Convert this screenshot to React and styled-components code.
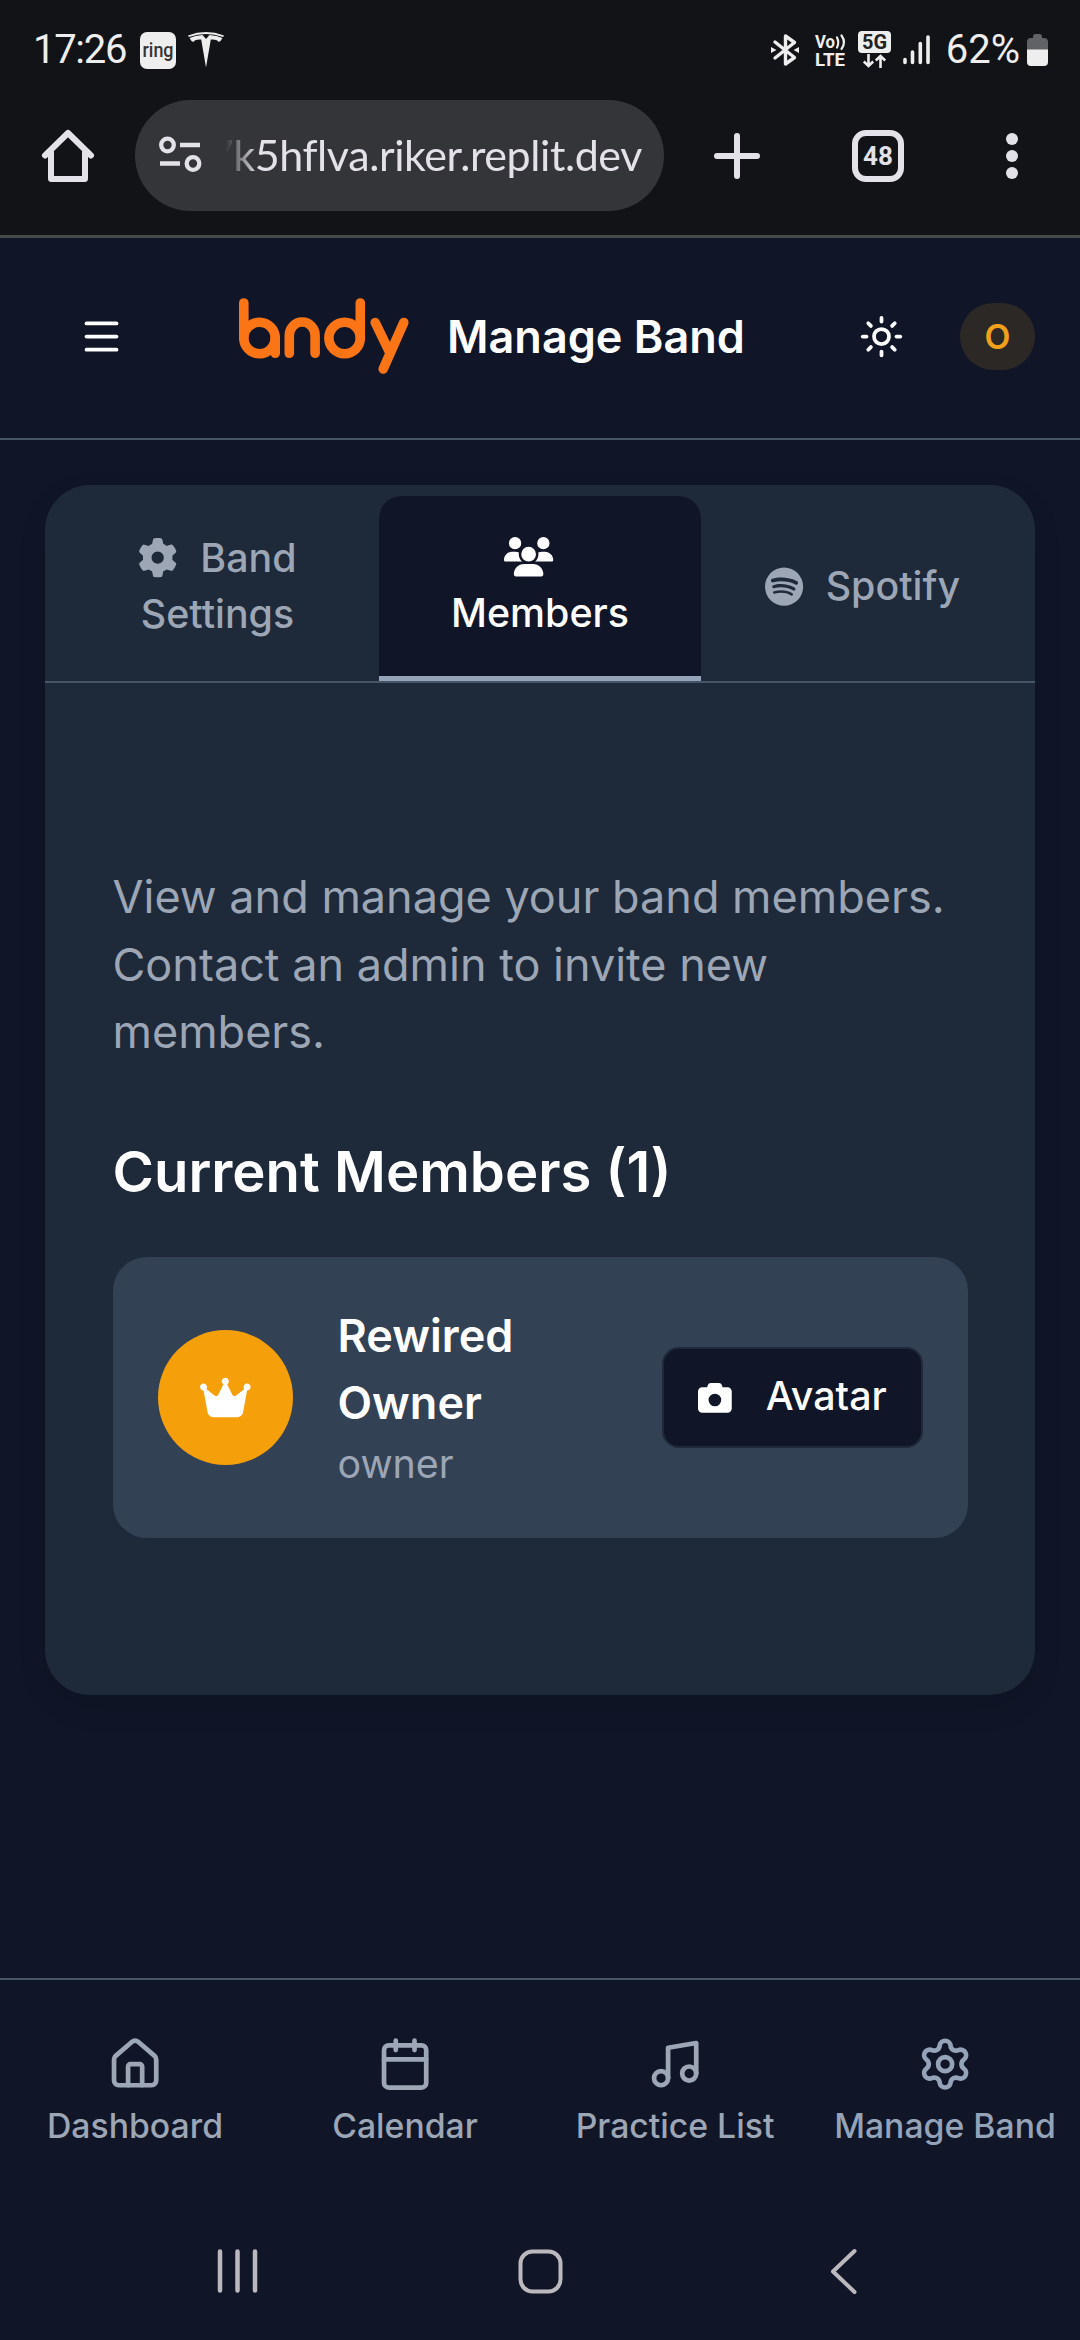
import React from "react";
import styled, { createGlobalStyle, css } from "styled-components";
import { Menu, Sun, House, Calendar, Music, Settings } from "lucide-react";
import { FaGear, FaUsers, FaSpotify, FaCrown, FaCamera } from "react-icons/fa6";

const color = {
  chrome: "#121317",
  chromeField: "#343539",
  chromeInk: "#e3e2e8",
  statusInk: "#eeeeee",
  page: "#101628",
  panel: "#1e293a",
  tile: "#334155",
  line: "#475569",
  muted: "#9ca6b5",
  accent: "#94a3b8",
  brand: "#fb7516",
  amber: "#f59f0b",
};

const GlobalStyle = createGlobalStyle`
  html { font-size: 45px; }
  * { box-sizing: border-box; }
  body { margin: 0; background: ${color.page}; }
  button { border: 0; margin: 0; padding: 0; background: none; font: inherit; color: inherit; }
  h1, h2, p { margin: 0; }
  svg { display: block; flex: none; overflow: visible; }
`;

const Screen = styled.div`
  width: 1080px;
  height: 2340px;
  display: flex;
  flex-direction: column;
  overflow: hidden;
  background: ${color.page};
  color: #fff;
  font-family: Inter, "Liberation Sans", sans-serif;
`;

/* Device status bar */
const StatusBar = styled.div`
  height: 100px;
  display: flex;
  align-items: flex-start;
  justify-content: space-between;
  padding: 26px 32px 0 33px;
  background: ${color.chrome};
  color: ${color.statusInk};
`;
const StatusGroup = styled.div`
  display: flex;
  align-items: center;
  height: 48px;
  gap: ${(p) => p.$gap}px;
`;
const StatusText = styled.span`
  font: 400 40px/48px Roboto, sans-serif;
  letter-spacing: ${(p) => p.$track || 0}px;
`;

/* Browser toolbar */
const Toolbar = styled.div`
  height: 138px;
  display: flex;
  align-items: flex-start;
  background: ${color.chrome};
  border-bottom: 3px solid #484a48;
  color: ${color.chromeInk};
`;
const ToolButton = styled.button`
  width: ${(p) => p.$width}px;
  height: 112px;
  display: flex;
  align-items: center;
  justify-content: center;
`;
const AddressField = styled.div`
  width: 529px;
  height: 111px;
  border-radius: 56px;
  background: ${color.chromeField};
  display: flex;
  align-items: center;
  padding: 0 22px 2px 24px;
`;
const Address = styled.div`
  flex: 1;
  margin-left: 24px;
  display: flex;
  justify-content: flex-end;
  overflow: hidden;
  white-space: nowrap;
  font: 400 43px/60px Lato, sans-serif;
  letter-spacing: -0.4px;
  mask-image: linear-gradient(to right, transparent 0, #000 32px);
`;
const TabCount = styled.span`
  width: 52px;
  height: 52px;
  border: 6px solid currentColor;
  border-radius: 14px;
  display: flex;
  align-items: center;
  justify-content: center;
  font: 700 26px/1 Roboto, sans-serif;
`;

/* App header */
const Header = styled.header`
  height: 202px;
  flex: none;
  display: flex;
  align-items: center;
  padding: 0 45px 3px 79px;
  border-bottom: 2px solid ${color.line};
`;
const Title = styled.h1`
  margin-left: 38px;
  font-size: 1rem;
  font-weight: 600;
  line-height: 1.5rem;
`;
const Logo = styled.svg`
  margin-left: 115px;
`;
const HeaderActions = styled.div`
  margin-left: auto;
  display: flex;
  align-items: center;
  gap: 56px;
`;
const UserBadge = styled.span`
  width: 75px;
  height: 67px;
  border-radius: 34px;
  background: #2c2826;
  color: #f0a01a;
  display: flex;
  align-items: center;
  justify-content: center;
  font-size: 0.75rem;
  font-weight: 600;
  line-height: 1rem;
`;

/* Content panel */
const Main = styled.main`
  flex: 1;
  padding: 1rem 1rem 0;
`;
const Panel = styled.section`
  height: 1210px;
  border-radius: 1rem;
  background: ${color.panel};
  box-shadow: 0 12px 28px rgba(0, 0, 0, 0.12);
`;
const Tabs = styled.nav`
  height: 198px;
  display: grid;
  grid-template-columns: repeat(3, 1fr);
  padding: 0.25rem 0.25rem 0;
  border-bottom: 2px solid ${color.line};
`;
const Tab = styled.button`
  padding: 0 1rem;
  font-size: 0.875rem;
  font-weight: 500;
  line-height: 1.25rem;
  color: ${color.muted};
  border-bottom: 5px solid transparent;
  svg {
    display: inline;
    width: ${(p) => p.$iconWidth}em;
    height: 1em;
    vertical-align: -0.15em;
    margin-right: 0.5rem;
  }
  ${(p) =>
    p.$active &&
    css`
      padding-bottom: 3px;
      color: #fff;
      background: ${color.page};
      border-radius: 0.5rem 0.5rem 0 0;
      border-bottom-color: ${color.accent};
    `}
`;
const PanelBody = styled.div`
  padding: 4rem 1.5rem 0;
`;
const Lead = styled.p`
  font-size: 1rem;
  line-height: 1.5rem;
  color: ${color.muted};
`;
const SectionTitle = styled.h2`
  margin: 1.5rem 0 1rem;
  font-size: 1.25rem;
  font-weight: 600;
  line-height: 1.75rem;
`;
const MemberCard = styled.article`
  display: flex;
  align-items: center;
  gap: 1rem;
  padding: 1rem;
  border-radius: 0.75rem;
  background: ${color.tile};
`;
const MemberAvatar = styled.div`
  width: 3rem;
  height: 3rem;
  flex: none;
  border-radius: 50%;
  background: ${color.amber};
  display: flex;
  align-items: center;
  justify-content: center;
  svg {
    width: 1.125rem;
    height: 1rem;
  }
`;
const MemberInfo = styled.div`
  flex: 1;
`;
const MemberName = styled.p`
  font-size: 1rem;
  font-weight: 600;
  line-height: 1.5rem;
`;
const MemberRole = styled.p`
  margin: -1px 0 1px;
  font-size: 0.875rem;
  line-height: 1.25rem;
  color: ${color.muted};
`;
const AvatarButton = styled.button`
  height: 2.25rem;
  padding: 0 0.75rem;
  display: flex;
  align-items: center;
  gap: 0.75rem;
  background: ${color.page};
  border: 2px solid ${color.panel};
  border-radius: 0.375rem;
  font-size: 0.875rem;
  font-weight: 500;
  line-height: 1.25rem;
`;
const AvatarLabel = styled.span`
  padding-bottom: 2px;
`;

/* Bottom navigation */
const BottomNav = styled.nav`
  height: 226px;
  flex: none;
  display: grid;
  grid-template-columns: repeat(4, 1fr);
  border-top: 2px solid ${color.line};
`;
const NavItem = styled.button`
  display: flex;
  flex-direction: column;
  align-items: center;
  gap: 10px;
  padding-top: 1.25rem;
  white-space: nowrap;
  font-size: 0.75rem;
  font-weight: 500;
  line-height: 1rem;
  color: ${(p) => (p.$active ? color.accent : color.muted)};
`;
const SystemNav = styled.div`
  height: 136px;
  flex: none;
  display: grid;
  grid-template-columns: repeat(3, 303px);
  justify-content: center;
  justify-items: center;
  align-items: center;
  padding-bottom: 2px;
  color: #bbb9be;
`;

const stroke = {
  fill: "none",
  stroke: "currentColor",
  strokeLinecap: "round",
  strokeLinejoin: "round",
};

const RingBadge = () => (
  <svg width="36" height="37" viewBox="0 0 36 37">
    <rect width="36" height="37" rx="7" fill="#eee" />
    <text x="18" y="25" textAnchor="middle" fontFamily="Roboto, sans-serif" fontSize="20" fontWeight="500" fill="#333" textLength="31" lengthAdjust="spacingAndGlyphs">
      ring
    </text>
  </svg>
);
const TeslaMark = () => (
  <svg width="36" height="36" viewBox="0 0 36 36" fill="currentColor">
    <path d="M0 3.400Q18-3.400 36 3.400L35.200 5Q18-1 .8 5Z" />
    <path d="M1.600 6Q7 3.300 14.500 3L18 7L21.500 3Q29 3.300 34.400 6Q33 9.500 30.500 10Q29.800 8 24.500 7.600L22.800 7.600L18 35.500L13.200 7.600L11.500 7.600Q6.200 8 5.500 10Q3 9.500 1.600 6Z" />
  </svg>
);
const BluetoothIcon = () => (
  <svg width="28" height="32" viewBox="0 0 28 32">
    <path {...stroke} strokeWidth="3.400" d="M4 8L23.500 23.500L14.500 30V2L23.500 8.500L4 24" />
    <path fill="currentColor" d="M0 13L5.500 16L0 19ZM28 13L22.500 16L28 19Z" />
  </svg>
);
const VolteIcon = () => (
  <svg width="31" height="34" viewBox="0 0 31 34" fill="currentColor" fontFamily="Roboto, sans-serif" fontWeight="700">
    <text x="0" y="15" fontSize="18" textLength="20" lengthAdjust="spacingAndGlyphs">Vo</text>
    <path {...stroke} strokeWidth="2.200" d="M22 4.500Q24.500 9.500 22 14.500M26.500 2.500Q31.500 9.500 26.500 16" />
    <text x="0" y="32.500" fontSize="18" textLength="30" lengthAdjust="spacingAndGlyphs">LTE</text>
  </svg>
);
const FiveGIcon = () => (
  <svg width="33" height="38" viewBox="0 0 33 38">
    <rect width="33" height="22" rx="4" fill="currentColor" />
    <text x="16.500" y="18" textAnchor="middle" fontFamily="Roboto, sans-serif" fontSize="20" fontWeight="700" fill="#222" textLength="25" lengthAdjust="spacingAndGlyphs">5G</text>
    <path {...stroke} strokeWidth="2.600" strokeLinecap="butt" strokeLinejoin="miter" d="M10.500 23V35M5.800 30.500L10.500 35L15.200 30.500M22.500 37V25M17.800 29.500L22.500 25L27.200 29.500" />
  </svg>
);
const SignalIcon = () => (
  <svg width="27" height="30" viewBox="0 0 27 30">
    <path {...stroke} strokeWidth="3.600" d="M2 24.500V27.500M9.500 17V27.500M17.300 8.500V27.500M25 2V27.500" />
  </svg>
);
const BatteryIcon = () => (
  <svg width="21" height="32" viewBox="0 0 21 32">
    <path fill="#616265" d="M6 4V2.500Q6 0 8.500 0H12.500Q15 0 15 2.500V4H17Q21 4 21 8V16H0V8Q0 4 4 4Z" />
    <path fill="currentColor" d="M0 15.500H21V28Q21 32 17 32H4Q0 32 0 28Z" />
  </svg>
);
const BrowserHome = () => (
  <svg width="54" height="54" viewBox="0 0 54 54">
    <path {...stroke} strokeWidth="6" d="M4 26.500L27 4L50 26.500M10 23V49.500Q10 50 10.500 50H43.500Q44 50 44 49.500V23" />
  </svg>
);
const TuneIcon = () => (
  <svg width="43" height="37" viewBox="0 0 43 37">
    <g {...stroke} strokeWidth="4.300" strokeLinecap="butt">
      <circle cx="8.500" cy="9" r="6.300" />
      <circle cx="34" cy="27.500" r="6.300" />
      <path d="M21 9H41M1 27.500H21" />
    </g>
  </svg>
);
const PlusIcon = () => (
  <svg width="46" height="46" viewBox="0 0 46 46">
    <path {...stroke} strokeWidth="6" d="M23 3V43M3 23H43" />
  </svg>
);
const MoreIcon = () => (
  <svg width="12" height="46" viewBox="0 0 12 46" fill="currentColor">
    <circle cx="6" cy="6" r="6" />
    <circle cx="6" cy="23" r="6" />
    <circle cx="6" cy="40" r="6" />
  </svg>
);
const BrandLogo = () => (
  <Logo width="170" height="77" viewBox="0 0 170 77" role="img" aria-label="bndy" color={color.brand}>
    <g {...stroke} strokeWidth="9.600">
      <path d="M4.800 5V40" />
      <circle cx="20.500" cy="40" r="15.700" />
      <path d="M36.200 40V55.300" />
      <path d="M50.300 55.300V37.500A12.900 13.500 0 0 1 76.100 37.500V55.300" />
      <circle cx="105.600" cy="40" r="15.700" />
      <path d="M121.300 5V40" />
      <path d="M136.200 24.500L150.500 54M164.800 24.500L144.200 71" />
    </g>
  </Logo>
);
const RecentsIcon = () => (
  <svg width="41" height="44" viewBox="0 0 41 44">
    <path {...stroke} strokeWidth="4.500" d="M3 2.500V41.500M20.500 2.500V41.500M38 2.500V41.500" />
  </svg>
);
const SystemHomeIcon = () => (
  <svg width="45" height="45" viewBox="0 0 45 45">
    <rect {...stroke} strokeWidth="4" x="2.500" y="2.500" width="40" height="40" rx="12" />
  </svg>
);
const BackIcon = () => (
  <svg width="27" height="47" viewBox="0 0 27 47">
    <path {...stroke} strokeWidth="4" d="M24.500 3L3 23.500L24.500 44" />
  </svg>
);

const tabs = [
  { label: "Band Settings", Icon: FaGear, iconWidth: 1 },
  { label: "Members", Icon: FaUsers, iconWidth: 1.25, active: true },
  { label: "Spotify", Icon: FaSpotify, iconWidth: 0.97 },
];
const navItems = [
  { label: "Dashboard", Icon: House },
  { label: "Calendar", Icon: Calendar },
  { label: "Practice List", Icon: Music },
  { label: "Manage Band", Icon: Settings, active: true },
];

export default function App() {
  return (
    <>
      <GlobalStyle />
      <Screen>
        <StatusBar>
          <StatusGroup $gap={14}>
            <StatusText $track={-1.3}>17:26</StatusText>
            <StatusGroup $gap={12}>
              <RingBadge />
              <TeslaMark />
            </StatusGroup>
          </StatusGroup>
          <StatusGroup $gap={16}>
            <BluetoothIcon />
            <StatusGroup $gap={12}>
              <VolteIcon />
              <FiveGIcon />
              <SignalIcon />
            </StatusGroup>
            <StatusGroup $gap={7}>
              <StatusText>62%</StatusText>
              <BatteryIcon />
            </StatusGroup>
          </StatusGroup>
        </StatusBar>

        <Toolbar>
          <ToolButton $width={135}><BrowserHome /></ToolButton>
          <AddressField>
            <TuneIcon />
            <Address>7k5hflva.riker.replit.dev</Address>
          </AddressField>
          <ToolButton $width={146}><PlusIcon /></ToolButton>
          <ToolButton $width={136}><TabCount>48</TabCount></ToolButton>
          <ToolButton $width={132}><MoreIcon /></ToolButton>
        </Toolbar>

        <Header>
          <Menu size={45} />
          <BrandLogo />
          <Title>Manage Band</Title>
          <HeaderActions>
            <Sun size={45} />
            <UserBadge>O</UserBadge>
          </HeaderActions>
        </Header>

        <Main>
          <Panel>
            <Tabs>
              {tabs.map(({ label, Icon, iconWidth, active }) => (
                <Tab key={label} $active={active} $iconWidth={iconWidth}>
                  <Icon />
                  {label}
                </Tab>
              ))}
            </Tabs>
            <PanelBody>
              <Lead>
                View and manage your band members. Contact an admin to invite new members.
              </Lead>
              <SectionTitle>Current Members (1)</SectionTitle>
              <MemberCard>
                <MemberAvatar><FaCrown /></MemberAvatar>
                <MemberInfo>
                  <MemberName>Rewired Owner</MemberName>
                  <MemberRole>owner</MemberRole>
                </MemberInfo>
                <AvatarButton>
                  <FaCamera size={33.75} />
                  <AvatarLabel>Avatar</AvatarLabel>
                </AvatarButton>
              </MemberCard>
            </PanelBody>
          </Panel>
        </Main>

        <BottomNav>
          {navItems.map(({ label, Icon, active }) => (
            <NavItem key={label} $active={active}>
              <Icon size={56.25} />
              {label}
            </NavItem>
          ))}
        </BottomNav>
        <SystemNav>
          <RecentsIcon />
          <SystemHomeIcon />
          <BackIcon />
        </SystemNav>
      </Screen>
    </>
  );
}
